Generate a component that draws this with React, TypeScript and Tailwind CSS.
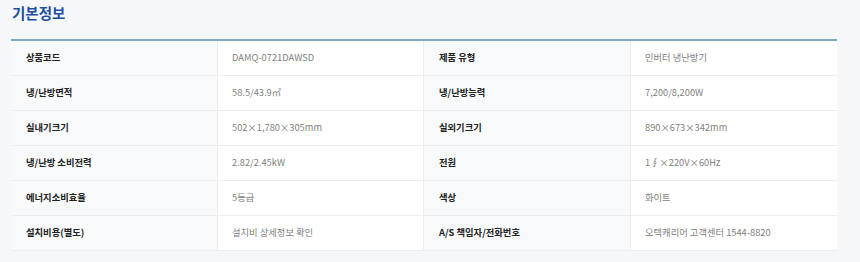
import React from 'react';

const rows: [string, string, string, string][] = [
  ['상품코드', 'DAMQ-0721DAWSD', '제품 유형', '인버터 냉난방기'],
  ['냉/난방면적', '58.5/43.9㎡', '냉/난방능력', '7,200/8,200W'],
  ['실내기크기', '502×1,780×305mm', '실외기크기', '890×673×342mm'],
  ['냉/난방 소비전력', '2.82/2.45kW', '전원', '1∮×220V×60Hz'],
  ['에너지소비효율', '5등급', '색상', '화이트'],
  ['설치비용(별도)', '설치비 상세정보 확인', 'A/S 책임자/전화번호', '오텍캐리어 고객센터 1544-8820'],
];

export default function App() {
  return (
    <div
      className="w-[860px] h-[262px] bg-[#f6f7f9] overflow-hidden"
      style={{ fontFamily: '"Noto Sans CJK KR", "Noto Sans", sans-serif' }}
    >
      <h2 className="pl-[12px] pt-[2px] h-[39px] text-[14.5px] leading-[22px] font-bold text-[#1d4f9c]">
        기본정보
      </h2>
      <div className="ml-[11px] w-[826px] border-t-2 border-[#7ba9c6]">
        {rows.map((r, i) => (
          <div key={i} className="grid grid-cols-[207px_206px_207px_206px] h-[35px] border-b border-[#eceef1]">
            <div className="bg-[#f8f9fb] pl-[15px] flex items-center text-[9.3px] font-bold text-[#222] border-r border-[#eceef1]">
              {r[0]}
            </div>
            <div className="bg-white pl-[14px] flex items-center text-[9.3px] text-[#808080] border-r border-[#eceef1]">
              {r[1]}
            </div>
            <div className="bg-[#f8f9fb] pl-[15px] flex items-center text-[9.3px] font-bold text-[#222] border-r border-[#eceef1]">
              {r[2]}
            </div>
            <div className="bg-white pl-[14px] flex items-center text-[9.3px] text-[#808080]">
              {r[3]}
            </div>
          </div>
        ))}
      </div>
    </div>
  );
}
